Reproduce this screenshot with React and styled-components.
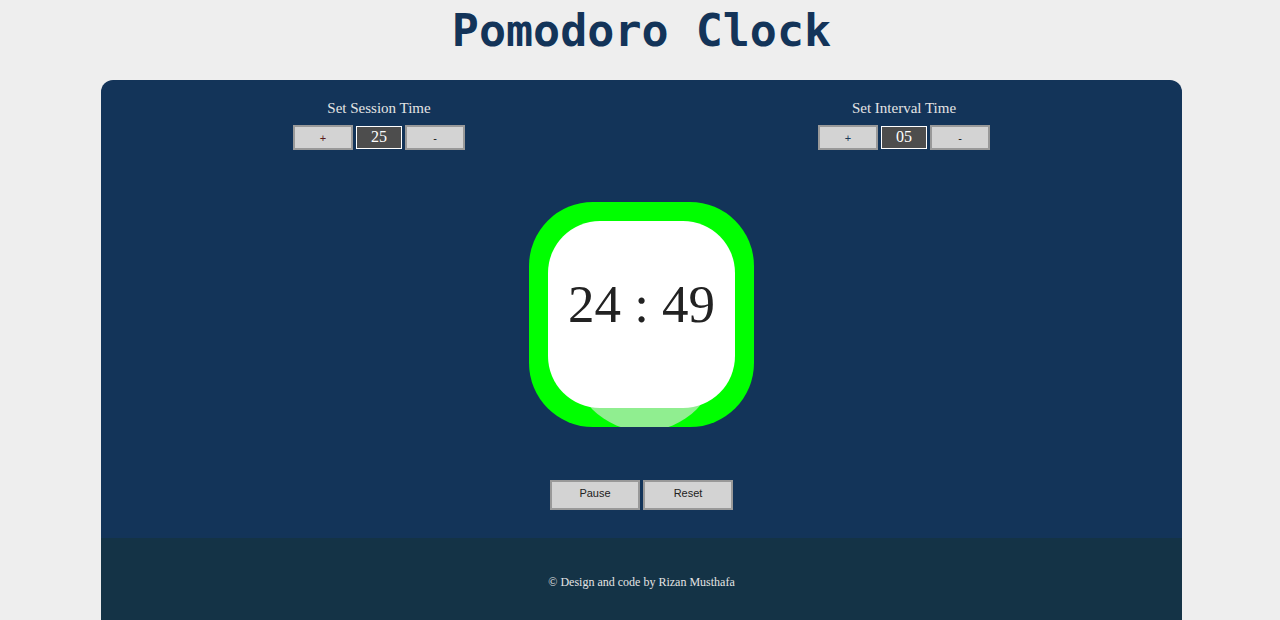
import React from 'react';
import styled, {createGlobalStyle} from 'styled-components';

const GlobalStyle = createGlobalStyle`
  html, body {
    margin: 0;
    padding: 0;
    background: #eeeeee;
  }
`;

const Page = styled.div`
  display: flex;
  flex-direction: column;
  align-items: center;
  padding-left: 3px;
`;

const Title = styled.h1`
  margin: 0;
  height: 80px;
  line-height: 62px;
  font-family: "DejaVu Sans Mono", monospace;
  font-weight: 700;
  font-size: 45px;
  color: #133459;
`;

const Card = styled.div`
  width: 1081px;
  border-radius: 12px 12px 0 0;
  overflow: hidden;
  background: #133459;
`;

const Main = styled.div`
  height: 458px;
  display: flex;
  flex-direction: column;
  align-items: center;
  padding-top: 18px;
  box-sizing: border-box;
`;

const Settings = styled.div`
  display: grid;
  grid-template-columns: 525px 525px;
  justify-content: center;
`;

const Setting = styled.div`
  display: flex;
  flex-direction: column;
  align-items: center;
`;

const Label = styled.div`
  font-family: "Liberation Serif", serif;
  font-size: 15px;
  line-height: 20px;
  color: #e4e4e4;
  margin-bottom: 7px;
`;

const Controls = styled.div`
  display: flex;
  gap: 3px;
  align-items: center;
`;

const StepButton = styled.button`
  width: 60px;
  height: 25px;
  padding: 0;
  background: #d3d3d3;
  border: 2px solid #999;
  font-family: "Liberation Sans", sans-serif;
  font-size: 11px;
  color: ${props => props.tint || '#111'};
`;

const Value = styled.div`
  width: 46px;
  height: 23px;
  box-sizing: border-box;
  border: 1px solid #fff;
  background: #4d4d4d;
  color: #fff;
  font-family: "Liberation Serif", serif;
  font-size: 16px;
  line-height: 20px;
  text-align: center;
`;

const Clock = styled.div`
  position: relative;
  margin-top: 52px;
  width: 225px;
  height: 225px;
  border-radius: 64px;
  background: #00ff00;
  overflow: hidden;
  display: flex;
  align-items: center;
  justify-content: center;
`;

const Fill = styled.div`
  position: absolute;
  left: 42px;
  top: 82px;
  width: 147px;
  height: 147px;
  border-radius: 50%;
  background: #90ee90;
`;

const Face = styled.div`
  position: relative;
  width: 187px;
  height: 187px;
  border-radius: 52px;
  background: #fff;
  display: flex;
  justify-content: center;
  padding-top: 48px;
  box-sizing: border-box;
`;

const Time = styled.div`
  font-family: "Liberation Serif", serif;
  font-size: 53px;
  line-height: 70px;
  color: #222;
`;

const Actions = styled.div`
  display: flex;
  gap: 3px;
  margin-top: 53px;
`;

const ActionButton = styled.button`
  width: 90px;
  height: 30px;
  padding: 0 0 5px;
  background: #d3d3d3;
  border: 2px solid #999;
  font-family: "Liberation Sans", sans-serif;
  font-size: 11px;
  color: #222;
`;

const Footer = styled.footer`
  height: 82px;
  padding-top: 6px;
  box-sizing: border-box;
  background: #143346;
  display: flex;
  align-items: center;
  justify-content: center;
  font-family: "Liberation Serif", serif;
  font-size: 12px;
  color: #e4e4e4;
`;

function TimeSetting({label, value, tint}) {
    return (
        <Setting>
            <Label>{label}</Label>
            <Controls>
                <StepButton tint={tint}>+</StepButton>
                <Value>{value}</Value>
                <StepButton>-</StepButton>
            </Controls>
        </Setting>
    );
}

function App() {
    return (
        <>
            <GlobalStyle/>
            <Page>
                <Title>Pomodoro Clock</Title>
                <Card>
                    <Main>
                        <Settings>
                            <TimeSetting label="Set Session Time" value="25" tint="#5a1a1a"/>
                            <TimeSetting label="Set Interval Time" value="05" tint="#1a3a5a"/>
                        </Settings>
                        <Clock>
                            <Fill/>
                            <Face>
                                <Time>24 : 49</Time>
                            </Face>
                        </Clock>
                        <Actions>
                            <ActionButton>Pause</ActionButton>
                            <ActionButton>Reset</ActionButton>
                        </Actions>
                    </Main>
                    <Footer>© Design and code by Rizan Musthafa</Footer>
                </Card>
            </Page>
        </>
    );
}

export default App;
